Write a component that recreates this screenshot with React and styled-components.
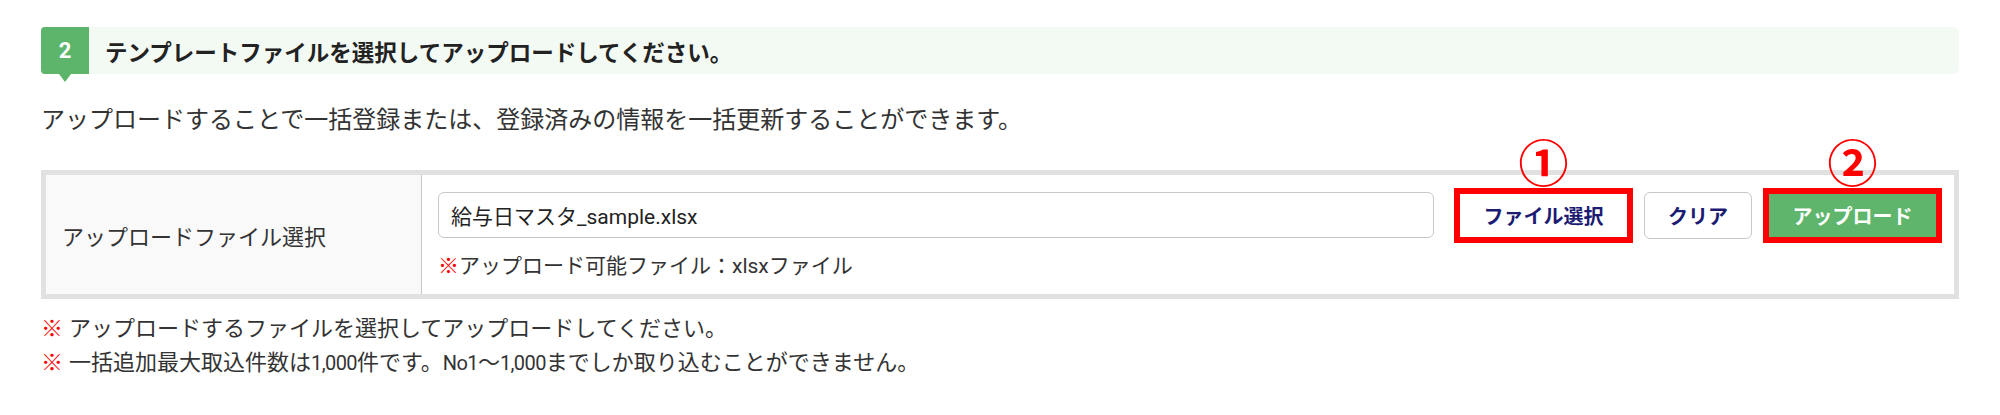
import React from 'react'
import styled, { createGlobalStyle, css } from 'styled-components'

const GlobalStyle = createGlobalStyle`
  html, body {
    margin: 0;
    padding: 0;
    background: #fff;
  }
  body {
    font-family: Roboto, "Noto Sans CJK JP", sans-serif;
    color: #333;
  }
`;

const Page = styled.div`
  width: 2000px;
  height: 415px;
  box-sizing: border-box;
  padding: 27px 41px 0 41px;
`;

const StepHeader = styled.div`
  display: flex;
  align-items: center;
  height: 47px;
  background: #f3f9f3;
  border-radius: 0 6px 6px 0;
`;

const StepBadge = styled.div`
  position: relative;
  display: flex;
  align-items: center;
  justify-content: center;
  width: 48px;
  height: 100%;
  background: #5cb56a;
  border-radius: 4px 0 0 4px;
  color: #fff;
  font-size: 22px;
  font-weight: 700;

  &::after {
    content: '';
    position: absolute;
    left: 50%;
    top: 100%;
    margin-left: -6px;
    border-left: 6px solid transparent;
    border-right: 6px solid transparent;
    border-top: 8px solid #5cb56a;
  }
`;

const StepTitle = styled.h2`
  margin: 0 0 0 16px;
  font-size: 22.5px;
  font-weight: 700;
  color: #222;
`;

const Lead = styled.p`
  margin: 29px 0 0 0;
  font-size: 24px;
  line-height: 34px;
  color: #333;
`;

const FormTable = styled.div`
  display: grid;
  grid-template-columns: 376px 1fr;
  margin-top: 33px;
  border: 5px solid #e1e1e1;
`;

const LabelCell = styled.div`
  display: flex;
  align-items: center;
  padding-left: 16px;
  background: #f9f9f9;
  border-right: 1px solid #c8c8c8;
  font-size: 22px;
  color: #333;
`;

const FieldCell = styled.div`
  padding: 17px 16px 13px 16px;
  background: #fff;
`;

const FieldRow = styled.div`
  display: flex;
  align-items: flex-start;
`;

const FileInput = styled.input`
  flex: 1;
  height: 46px;
  box-sizing: border-box;
  margin: 0 24px 0 0;
  padding: 0 12px;
  border: 1px solid #c8c8c8;
  border-radius: 6px;
  font-family: Roboto, "Noto Sans CJK JP", sans-serif;
  font-size: 21px;
  color: #222;
  background: #fff;
  outline: none;
`;

const Button = styled.button`
  position: relative;
  height: 47px;
  box-sizing: border-box;
  margin-right: ${p => (p.$last ? 0 : 15)}px;
  padding: 0;
  width: ${p => p.$width}px;
  border: 1px solid #c8c8c8;
  border-radius: 6px;
  background: #fff;
  color: #1b1b72;
  font-family: "Noto Sans CJK JP", sans-serif;
  font-size: 20px;
  font-weight: 700;

  ${p => p.$primary && css`
    background: #5eb56b;
    border-color: #5eb56b;
    color: #fff;
  `}

  ${p => p.$marked && css`
    border-radius: 0;
    outline: 6px solid #ff0000;
    outline-offset: -2px;
  `}
`;

const Marker = styled.span`
  position: absolute;
  left: 50%;
  top: -58px;
  transform: translateX(-50%);
  font-family: "Noto Sans CJK JP", sans-serif;
  font-size: 50px;
  line-height: 1;
  font-weight: 700;
  color: #ff0000;
`;

const Hint = styled.p`
  margin: 12px 0 0 0;
  font-size: 21px;
  line-height: 30px;
  color: #333;
`;

const Mark = styled.span`
  color: #ff0000;
  margin-right: ${p => p.$gap || 0}px;
`;

const Notes = styled.div`
  margin-top: 13px;
`;

const Note = styled.p`
  margin: 0;
  font-size: 22px;
  line-height: 34px;
  color: #333;
`;

const Num = styled.span`
  font-size: 20px;
  letter-spacing: -0.6px;
`;

export default function App() {
  return (
    <>
      <GlobalStyle />
      <Page>
        <StepHeader>
          <StepBadge>2</StepBadge>
          <StepTitle>テンプレートファイルを選択してアップロードしてください。</StepTitle>
        </StepHeader>

        <Lead>アップロードすることで一括登録または、登録済みの情報を一括更新することができます。</Lead>

        <FormTable>
          <LabelCell>アップロードファイル選択</LabelCell>
          <FieldCell>
            <FieldRow>
              <FileInput readOnly value="給与日マスタ_sample.xlsx" />
              <Button $marked $width={171}>
                ファイル選択
                <Marker>①</Marker>
              </Button>
              <Button $width={108}>クリア</Button>
              <Button $marked $primary $last $width={171}>
                アップロード
                <Marker>②</Marker>
              </Button>
            </FieldRow>
            <Hint><Mark>※</Mark>アップロード可能ファイル：xlsxファイル</Hint>
          </FieldCell>
        </FormTable>

        <Notes>
          <Note><Mark $gap={6}>※</Mark>アップロードするファイルを選択してアップロードしてください。</Note>
          <Note>
            <Mark $gap={6}>※</Mark>一括追加最大取込件数は<Num>1,000</Num>件です。<Num>No1</Num>～<Num>1,000</Num>までしか取り込むことができません。
          </Note>
        </Notes>
      </Page>
    </>
  );
}
